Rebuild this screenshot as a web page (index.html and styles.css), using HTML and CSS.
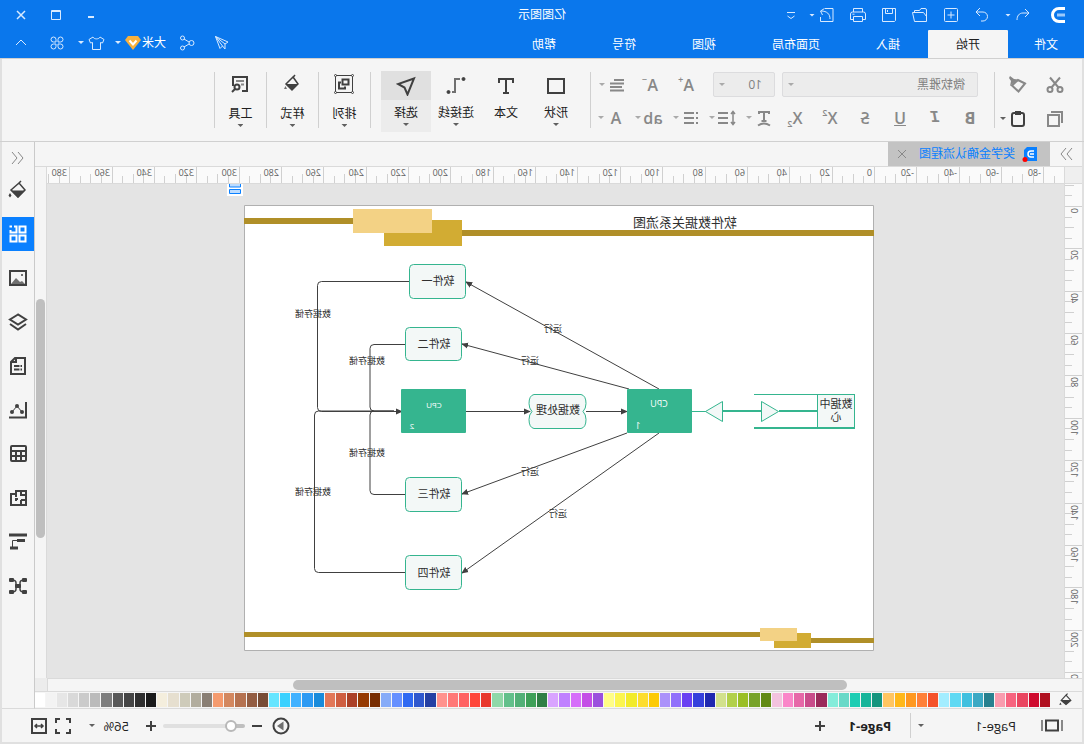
FILE: index.html
```html
<!DOCTYPE html>
<html lang="zh-CN">
<head>
<meta charset="utf-8">
<title>亿图图示</title>
<meta name="viewport" content="width=device-width, initial-scale=1">
<link rel="stylesheet" href="styles.css">
</head>
<body>
<div class="app">
  <header class="header">
    <div class="titlebar">
      <div class="titlebar-start">
        <svg class="logo" viewBox="0 0 20 20" aria-label="logo"><path d="M3 3.500h6a6.500 6.500 0 0 1 0 13H3" fill="none" stroke="#fff" stroke-width="3"/><path d="M3 10h8" stroke="#9cc9fa" stroke-width="3"/></svg>
        <div class="quick">
          <span class="split"><button aria-label="撤销"><svg class="icon" viewBox="0 0 20 20"><path d="M8 4L4 8l4 4M4 8h6c4 0 6 3 6 7"/></svg></button><i class="caret"></i></span>
          <button aria-label="重做"><svg class="icon" viewBox="0 0 20 20"><path d="M12 3l4 4-4 4M16 7H9a4.500 4.500 0 0 0 0 9h2"/></svg></button>
          <button aria-label="新建"><svg class="icon" viewBox="0 0 20 20"><rect x="3.500" y="3.500" width="13" height="13" rx="1"/><path d="M10 6.500v7M6.500 10h7"/></svg></button>
          <button aria-label="打开"><svg class="icon" viewBox="0 0 20 20"><path d="M3.500 16.500V5q0-1.500 1.500-1.500h4l1.500 2h5v2M3.500 16.500h12l2-9h-11l-3 4"/></svg></button>
          <button aria-label="保存"><svg class="icon" viewBox="0 0 20 20"><path d="M3.500 3.500h13v13h-12l-1-1zM6.500 3.500v5h7v-5M11.500 5v2"/></svg></button>
          <button aria-label="打印"><svg class="icon" viewBox="0 0 20 20"><path d="M5.500 7V3.500h9V7M5 14.500H2.500V9q0-2 2-2h11q2 0 2 2v5.500H15M5.500 11.500h9v5h-9zM13.500 9.200h2"/></svg></button>
          <span class="split"><button aria-label="导出"><svg class="icon" viewBox="0 0 20 20"><path d="M12 3.500H4v13h12.500V12M7 14c0-5 3-8 9-8M12.500 3.500L16.500 6l-2 4"/></svg></button><i class="caret"></i></span>
          <button class="more" aria-label="更多"><svg class="icon" viewBox="0 0 20 20"><path d="M6 7.500h8M6.500 11l3.500 2.500 3.500-2.500"/></svg></button>
        </div>
      </div>
      <h1 class="title">亿图图示</h1>
      <div class="window-controls">
        <button aria-label="最小化"><svg class="icon strong" viewBox="0 0 20 20"><path d="M7 12h6"/></svg></button>
        <button aria-label="最大化"><svg class="icon" viewBox="0 0 20 20"><path d="M5.500 5.500h9v9h-9zM5.500 6.500h9"/></svg></button>
        <button aria-label="关闭"><svg class="icon" viewBox="0 0 20 20"><path d="M6 6l8 8M14 6l-8 8" stroke-width="1.500"/></svg></button>
      </div>
    </div>
    <div class="menubar">
      <nav class="menus">
        <a class="menu-item file" href="#">文件</a>
        <a class="menu-item active" href="#">开始</a>
        <a class="menu-item" href="#">插入</a>
        <a class="menu-item" href="#">页面布局</a>
        <a class="menu-item" href="#">视图</a>
        <a class="menu-item" href="#">符号</a>
        <a class="menu-item" href="#">帮助</a>
      </nav>
      <div class="account">
        <button aria-label="发送"><svg class="icon" viewBox="0 0 20 20"><path d="M16.500 3.500L4 9l3 2v5l2.500-3 2.500 2.500zM16.500 3.500L7 11M16.500 3.500L9.500 13"/></svg></button>
        <button aria-label="分享"><svg class="icon" viewBox="0 0 20 20"><circle cx="5.500" cy="10" r="2.500"/><circle cx="14.500" cy="5" r="2"/><circle cx="14.500" cy="15" r="2"/><path d="M8 9l5-3M8 11l5 3"/></svg></button>
        <button class="user">大米<svg class="badge" viewBox="0 0 18 18"><path d="M4 2h10l3 4-8 10L1 6z" fill="#f9b13c"/><path d="M5.500 6.500L9 10.500l3.500-4" fill="none" stroke="#fff" stroke-width="2"/></svg><i class="caret"></i></button>
        <button class="user" aria-label="主题"><svg class="icon" viewBox="0 0 20 20"><path d="M7 4L3 6.500 4.500 10l2-.5v7h8v-7l2 .5L18 6.500 14 4c-1 2.500-6 2.500-7 0z"/></svg><i class="caret"></i></button>
        <button aria-label="应用"><svg class="icon" viewBox="0 0 20 20"><path d="M9 6.500a2.500 2.500 0 1 0-2.500 2.500H9zM11 6.500a2.500 2.500 0 1 1 2.500 2.500H11zM9 13.500A2.500 2.500 0 1 1 6.500 11H9zM11 13.500a2.500 2.500 0 1 0 2.500-2.500H11z"/></svg></button>
        <button aria-label="收起"><svg class="icon" viewBox="0 0 20 20"><path d="M5 12l5-5 5 5"/></svg></button>
      </div>
    </div>
  </header>

  <section class="ribbon">
    <div class="clipboard">
      <button aria-label="剪切"><svg class="tool" viewBox="0 0 20 20"><circle cx="5" cy="14.500" r="2.500"/><circle cx="15" cy="14.500" r="2.500"/><path d="M5 2.500l8.500 10M15 2.500l-8.500 10"/></svg></button>
      <button aria-label="格式刷"><svg class="tool" viewBox="0 0 20 20"><path d="M3 8.500l7-3.500 6 5.500-6.500 6z"/><path d="M10 4.500l4-.5 4-3 1 2-2 3 1 5z" fill="#888" stroke="none"/></svg></button>
      <button aria-label="复制"><svg class="tool" viewBox="0 0 20 20"><path d="M6 6h11v11H6zM3 14V3h11"/></svg></button>
      <button class="split" aria-label="粘贴"><svg class="tool dark" viewBox="0 0 20 20"><rect x="4" y="4" width="12" height="13" rx="2"/><path d="M7 2h6v4H7z" fill="#404040" stroke="none"/></svg><i class="caret dark"></i></button>
    </div>
    <div class="divider"></div>
    <div class="font-tools">
      <div class="font-row">
        <span class="combo"><select class="font-family" aria-label="字体"><option>微软雅黑</option></select><i class="caret"></i></span>
        <span class="combo combo-size"><select class="font-size" aria-label="字号"><option>10</option></select><i class="caret"></i></span>
        <button class="glyph" aria-label="增大字号">A<sup>+</sup></button>
        <button class="glyph" aria-label="减小字号">A<sup>−</sup></button>
        <button class="split" aria-label="对齐"><svg class="tool" viewBox="0 0 20 20"><path d="M3 5h10M3 8.500h14M5 12h12M3 15.500h14"/></svg><i class="caret"></i></button>
      </div>
      <div class="format-row">
        <button class="glyph bold" aria-label="加粗">B</button>
        <button class="glyph italic" aria-label="斜体">I</button>
        <button class="glyph under" aria-label="下划线">U</button>
        <button class="glyph strike" aria-label="删除线">S</button>
        <button class="glyph" aria-label="上标">X<sup>2</sup></button>
        <button class="glyph" aria-label="下标">X<sub>2</sub></button>
        <button class="split" aria-label="文字方向"><svg class="tool" viewBox="0 0 20 20"><path d="M5 6V4h10v2M10 4v9M7.500 13h5M4 17.500q6-4 12 0"/></svg><i class="caret"></i></button>
        <button class="split" aria-label="行距"><svg class="tool" viewBox="0 0 20 20"><path d="M9 5h10M9 10h10M9 15h10"/><path d="M4 4v12M2 6l2-2.500L6 6M2 14l2 2.500L6 14" stroke-width="1.500"/></svg><i class="caret"></i></button>
        <button class="split" aria-label="列表"><svg class="tool" viewBox="0 0 20 20"><path d="M3 5h2M3 10h2M3 15h2M7 5h10M7 10h10M7 15h10"/></svg><i class="caret"></i></button>
        <button class="split glyph" aria-label="大小写"><span class="letters">ab</span><i class="caret"></i></button>
        <button class="split glyph" aria-label="字体颜色"><span class="letters">A</span><i class="caret"></i></button>
      </div>
    </div>
    <div class="divider"></div>
    <div class="big-tools">
      <button class="big"><span class="big-icon"><svg class="tool dark" viewBox="0 0 20 20"><path d="M2 3h16v14H2z"/></svg></span><span>形状</span><i class="caret dark"></i></button>
      <button class="big"><span class="big-icon"><svg class="tool dark" viewBox="0 0 20 20"><path d="M3 7V3h14v4M10 3v14M7 17h6"/></svg></span><span>文本</span></button>
      <button class="big"><span class="big-icon"><svg class="tool dark" viewBox="0 0 20 20"><path d="M6 3h5v13H14" stroke="#707070"/><circle cx="2.500" cy="3" r="1.500" fill="#404040" stroke-width="1"/><circle cx="17.500" cy="16" r="1.500" fill="#404040" stroke-width="1"/></svg></span><span>连接线</span><i class="caret dark"></i></button>
      <button class="big selected"><span class="big-icon"><svg class="tool dark" viewBox="0 0 20 20"><path d="M2 2.500l16 5.500-6.500 3.500-3 7z"/></svg></span><span>选择</span><i class="caret dark"></i></button>
    </div>
    <div class="divider"></div>
    <button class="big compact"><span class="big-icon"><svg class="tool dark thin" viewBox="0 0 20 20"><path d="M1.500 1.500h17v17h-17z"/><path d="M5.500 5.500h6v5h-6zM13 8.500h2v6H9v-2" stroke-width="2"/><g fill="#f5f5f5"><circle cx="1.500" cy="1.500" r="1"/><circle cx="18.500" cy="1.500" r="1"/><circle cx="1.500" cy="18.500" r="1"/><circle cx="18.500" cy="18.500" r="1"/></g></svg></span><span>排列</span><i class="caret dark"></i></button>
    <div class="divider"></div>
    <button class="big compact"><span class="big-icon"><svg class="tool dark" viewBox="0 0 20 20"><path d="M7 1l2.500 3M9 3l7 7-6 6-6-6z" stroke-width="1.500"/><path d="M4 10h12l-6 6z" fill="#404040" stroke="none"/><path d="M16.500 12l1.500 3h-3z" fill="#707070" stroke="none"/></svg></span><span>样式</span><i class="caret dark"></i></button>
    <div class="divider"></div>
    <button class="big compact"><span class="big-icon"><svg class="tool dark" viewBox="0 0 20 20"><path d="M8 17H3V3h14v9" /><path d="M6 7h8M6 10.500h3" stroke="#888"/><circle cx="13" cy="13" r="2.500"/><path d="M15 15l3 3"/></svg></span><span>工具</span><i class="caret dark"></i></button>
    <div class="divider"></div>
  </section>

  <div class="body">
    <main class="main">
      <div class="doc-tabs">
        <button class="expand" aria-label="展开"><svg class="tool thin" viewBox="0 0 20 20"><path d="M4 4l5 6-5 6M10 4l5 6-5 6"/></svg></button>
        <div class="doc-tab">
          <svg class="doc-icon" viewBox="0 0 16 16"><path d="M1 1h10l3 3v11H1z" fill="#0a80ff"/><path d="M4 5h3q3 0 3 3t-3 3H4M4 8h4" fill="none" stroke="#fff" stroke-width="1.500"/><circle cx="13" cy="13.500" r="2.500" fill="#f00"/></svg>
          <a href="#">奖学金确认流程图</a>
          <button aria-label="关闭文档"><svg class="tool thin" viewBox="0 0 20 20"><path d="M6 6l8 8M14 6l-8 8"/></svg></button>
        </div>
      </div>
      <div class="workspace">
        <div class="corner"></div>
        <svg class="ruler-h" id="ruler-h"></svg>
        <svg class="ruler-v" id="ruler-v"></svg>
        <div class="canvas">
          <svg class="float-tool" viewBox="0 0 16 12"><path d="M0 0h16v12H0z" fill="#fff"/><path d="M2.500-1h11v4h-11zM2.500 5.500h11v4h-11z" fill="#bcdcff" stroke="#0a80ff"/></svg>
          <svg class="page" viewBox="210 205 630 446" role="img" aria-label="软件数据关系流图">
            <defs><marker id="head" viewBox="0 0 8 8" refX="7" refY="4" markerWidth="7" markerHeight="7" orient="auto" markerUnits="userSpaceOnUse"><path d="M0 0.500l8 3.500-8 3.500z" fill="#404040"/></marker></defs>
            <path d="M210.500 205.500h629v445h-629z" fill="#fff" stroke="#b0b0b0"/>
            <g fill="#b08f28"><path d="M731 218h109v6H731zM210 230h412v6H210zM324 632h516v5H324zM210 638h63v5H210z"/></g>
            <g fill="#d2ac33"><rect x="622" y="220" width="78" height="26"/><rect x="273" y="633" width="37" height="15"/></g>
            <g fill="#f3d285"><rect x="652" y="209" width="79" height="24"/><rect x="287" y="628" width="37" height="13"/></g>
            <g class="links">
              <path d="M425 389L618 282" marker-end="url(#head)"/>
              <path d="M455 389L622 344" marker-end="url(#head)"/>
              <path d="M457 433L622 494" marker-end="url(#head)"/>
              <path d="M425 433L622 573" marker-end="url(#head)"/>
              <path d="M498 411.500H457" marker-end="url(#head)"/>
              <path d="M618 411.500H554" marker-end="url(#head)"/>
              <path d="M675 281.500H762.500q4 0 4 4V407.500q0 4-4 4H682" marker-end="url(#head)"/>
              <path d="M679 572.500h86.500q4 0 4-4V415q0-4-4-4H690"/>
              <path d="M679 344.500h31q4 0 4 4V407q0 4-4 4H690M679 494.500h31q4 0 4-4V415q0-4-4-4"/>
            </g>
            <g class="node">
              <rect x="618.500" y="264.500" width="56" height="34" rx="4"/>
              <rect x="622.500" y="327.500" width="56" height="33" rx="4"/>
              <rect x="622.500" y="477.500" width="56" height="34" rx="4"/>
              <rect x="622.500" y="555.500" width="56" height="34" rx="4"/>
              <path d="M503 394.500h47q5 1 5 9 0 5-3 8 3 3 3 8 0 8-5 9h-47q-5-1-5-9 0-5 3-8-3-3-3-8 0-8 5-9z"/>
              <path d="M229.500 394.500h37v34h-37z"/>
              <path d="M229 394.500h101M378 411.500h14"/>
              <path d="M229 428h101M267 411h38M322 411h39" stroke-width="2"/>
              <path d="M378.500 411.500l-17-10v20zM305.500 411.500l17-10v20z"/>
            </g>
            <g fill="#35b58f"><rect x="392" y="389" width="65" height="44" rx="1"/><rect x="618" y="389" width="65" height="44" rx="1"/></g>
            <g class="label-title"><text x="399" y="227">软件数据关系流图</text></g>
            <g class="label-node">
              <text x="646" y="285">软件一</text><text x="650" y="348">软件二</text><text x="650" y="498">软件三</text><text x="650" y="577">软件四</text>
              <text x="526" y="414">数据处理</text><text x="248" y="408">数据中</text><text x="248" y="421">心</text>
            </g>
            <g class="label-link">
              <text x="531" y="332">运行</text><text x="554" y="364">运行</text><text x="554" y="475">运行</text><text x="526" y="517">运行</text>
              <text x="771" y="317">数据存储</text><text x="717" y="364">数据存储</text><text x="717" y="456">数据存储</text><text x="771" y="495">数据存储</text>
            </g>
            <g class="label-cpu"><text x="425" y="407">CPU</text><text x="446" y="429">1</text></g>
            <g class="label-cpu small"><text x="650" y="408">CPU</text><text x="672" y="429">2</text></g>
          </svg>
        </div>
        <div class="scroll-v"><div class="thumb-v"></div></div>
      </div>
      <div class="scroll-row"><div class="scroll-h"><div class="thumb-h"></div></div></div>
      <div class="palette">
        <svg class="tool dark palette-icon" viewBox="0 0 20 20"><path d="M8 2l2 2M10 4l6 6.500-6 5-6-5z" stroke-width="1.500"/><path d="M4 10h12l-6 6z" fill="#404040" stroke="none"/><path d="M17 13l1.500 3h-3z" fill="#404040" stroke="none"/></svg>
        <div class="swatches" id="swatches"></div>
      </div>
    </main>
    <aside class="sidebar">
      <button class="side-top" aria-label="折叠"><svg class="tool thin" viewBox="0 0 20 20"><path d="M10 4l-5 6 5 6M16 4l-5 6 5 6"/></svg></button>
      <button aria-label="填充"><svg class="tool dark" viewBox="0 0 20 20"><path d="M7 1l3 3M9 3l8 7-7 7-7-7z" stroke-width="1.500"/><path d="M3 10.500h14L10 18z" fill="#404040" stroke="none"/><path d="M18 13l1.500 2.500-1.500 2-1.500-2z" fill="#404040" stroke="none"/></svg></button>
      <button class="current" aria-label="符号库"><svg class="tool" viewBox="0 0 20 20"><path d="M2.500 2.500h6v6h-6zM2.500 11.500h6v6h-6zM11.500 11.500h6v6h-6z"/><path d="M14 2.500h-2.500v6h6V6M16 2.500h2.500"/></svg></button>
      <button aria-label="图片"><svg class="tool dark" viewBox="0 0 20 20"><path d="M2 3h16v14H2z"/><path d="M3 16l3-3 2 1 4-4 5 6z" fill="#707070" stroke="none"/><circle cx="6" cy="7" r="1" fill="#404040" stroke="none"/></svg></button>
      <button aria-label="图层"><svg class="tool dark" viewBox="0 0 20 20"><path d="M10 2.500l8 5-8 5-8-5zM2 12l8 5.500 8-5.500"/></svg></button>
      <button aria-label="页面"><svg class="tool dark" viewBox="0 0 20 20"><path d="M3 2h10l4 4v12H3z"/><path d="M12 2v4h4M8.500 10H14M8.500 13.500H14M6 10h1.500M6 13.500h1.500"/></svg></button>
      <button aria-label="图表"><svg class="tool dark" viewBox="0 0 20 20"><path d="M2 2v15.500h17"/><path d="M6 12l5-6 5 6" stroke-width="1"/><g fill="#404040" stroke="none"><circle cx="6" cy="12" r="2"/><circle cx="11" cy="6" r="2"/><circle cx="16" cy="12" r="2"/></g></svg></button>
      <button aria-label="表格"><svg class="tool dark" viewBox="0 0 20 20"><rect x="2" y="2" width="15" height="15" rx="1"/><path d="M2 7h15M2 12h15M7 7v10M12 7v10"/></svg></button>
      <button aria-label="平面图"><svg class="tool dark" viewBox="0 0 20 20"><path d="M2 3h10v3h5v11H2zM2 7h5V3M7 12H2M7 17v-5M12 6v3M12 13v-2h-2"/></svg></button>
      <button aria-label="甘特图"><svg class="tool dark" viewBox="0 0 20 20"><path d="M1 3h18" stroke-width="3"/><path d="M3 8.500h8M10 16h8" stroke-width="3"/><path d="M11 8.500h4.500V15" stroke-width="1"/></svg></button>
      <button aria-label="思维导图"><svg class="tool dark" viewBox="0 0 20 20"><path d="M4 4q4 0 4 3v6q0 3-4 3M16 4q-4 0-4 3v6q0 3 4 3M8 10h4" stroke-width="1.500"/><g fill="#404040" stroke="none"><rect x="1" y="2" width="5" height="4" rx="1"/><rect x="1" y="14" width="5" height="4" rx="1"/><rect x="14" y="2" width="5" height="4" rx="1"/><rect x="14" y="14" width="5" height="4" rx="1"/><rect x="7" y="8" width="6" height="4" rx="1"/></g></svg></button>
    </aside>
  </div>

  <footer class="status">
    <div class="pages">
      <button aria-label="页面视图"><svg class="layout-icon" viewBox="0 0 24 20"><path d="M6 4.500h12v10H6z"/><path d="M2 4v11M22 4v11" stroke="#888"/></svg></button>
      <button class="page-picker">Page-1<i class="caret dark"></i></button>
      <button class="page-tab">Page-1</button>
      <button aria-label="添加页面"><svg class="tool dark" viewBox="0 0 20 20"><path d="M10 5v10M5 10h10"/></svg></button>
    </div>
    <div class="zoom">
      <button aria-label="演示"><svg class="tool dark" viewBox="0 0 20 20"><circle cx="10" cy="10" r="7.500"/><path d="M7.500 5.500l6.500 4.500-6.500 4.500z" fill="#707070" stroke="none"/></svg></button>
      <button aria-label="缩小"><svg class="tool dark" viewBox="0 0 20 20"><path d="M5 10h10"/></svg></button>
      <input type="range" min="0" max="100" value="11" aria-label="缩放">
      <button aria-label="放大"><svg class="tool dark" viewBox="0 0 20 20"><path d="M10 5v10M5 10h10"/></svg></button>
      <button class="percent">56%<i class="caret dark"></i></button>
      <button aria-label="全屏"><svg class="tool dark" viewBox="0 0 20 20"><path d="M3 7V3h4M13 3h4v4M17 13v4h-4M7 17H3v-4"/></svg></button>
      <button aria-label="适合宽度"><svg class="tool dark" viewBox="0 0 20 20"><path d="M3 3h14v14H3z"/><path d="M6 10h8M8 8l-2 2 2 2M12 8l2 2-2 2" stroke-width="1.500"/></svg></button>
    </div>
  </footer>
</div>
<script src="app.js"></script>
</body>
</html>
```

FILE: styles.css
```css
* { box-sizing: border-box; }

body {
  margin: 0;
  font-family: "Open Sans", "Noto Sans CJK SC", sans-serif;
  font-size: 12px;
  line-height: 16px;
  color: #202020;
  overflow: hidden;
}

button {
  display: flex;
  align-items: center;
  justify-content: center;
  padding: 0;
  border: 0;
  background: none;
  color: inherit;
  font: inherit;
}

a { color: inherit; text-decoration: none; }

/* The whole window is shown as a mirror image. */
.app {
  display: flex;
  flex-direction: column;
  height: 100vh;
  background: #f5f5f5;
  transform: scaleX(-1);
}

.icon {
  flex: none;
  width: 20px;
  height: 20px;
  fill: none;
  stroke: #d8eaff;
  stroke-width: 1;
}
.icon.strong { stroke-width: 2; }

.tool {
  width: 20px;
  height: 20px;
  flex: none;
  fill: none;
  stroke: #888;
  stroke-width: 2;
}
.tool.dark { stroke: #404040; }
.tool.thin { stroke-width: 1; }

.caret {
  flex: none;
  width: 6px;
  height: 3px;
  margin: 0 2px;
  background: #aaa;
  clip-path: polygon(0 0, 100% 0, 50% 100%);
}
.caret.dark { background: #606060; }
.header .caret { background: #d8eaff; }

.split { display: flex; align-items: center; }

/* Header */
.header { flex: none; background: #0a77ec; color: #fff; }

.titlebar { display: flex; align-items: center; height: 30px; padding: 0 11px; }
.titlebar-start, .window-controls { display: flex; flex: 1; align-items: center; }
.logo { width: 20px; height: 20px; margin: 0 15px 0 5px; }
.quick { display: flex; align-items: center; gap: 11px; }
.more { width: 10px; }
.title { margin: 0; font-size: 12px; font-weight: 400; }
.window-controls { justify-content: flex-end; gap: 15px; }

.menubar { display: flex; justify-content: space-between; height: 28px; }
.menus { display: flex; }
.menu-item { padding: 7px 28px 5px; }
.menu-item.file { padding: 7px 26px 5px; }
.menu-item.active { background: #f5f5f5; color: #202020; border-radius: 1px 1px 0 0; }
.account {
  display: grid;
  grid-template-columns: 35px 31px 59px 40px 36px 20px;
  align-items: center;
  justify-items: start;
  padding: 0 11px 3px 0;
}
.account .caret { margin: 0 3px; }
.badge { width: 18px; height: 18px; }

/* Ribbon */
.ribbon {
  display: flex;
  flex: none;
  height: 84px;
  padding: 12px 0 0 11px;
  border: solid #d0d0d0;
  border-width: 1px 0;
  box-shadow: inset 2px 0 #e0e0e0, inset -2px 0 #e0e0e0;
}
.divider { flex: none; width: 1px; height: 56px; margin-top: 1px; background: #d0d0d0; }

.clipboard {
  display: grid;
  grid-template-columns: 36px 32px;
  grid-template-rows: 25px 25px;
  gap: 9px;
  padding: 1px 1px 0 0;
}
.clipboard button:nth-child(even) { justify-content: flex-start; }

.font-tools { width: 403px; padding: 1px 0 0 14px; }
.font-row, .format-row { display: grid; height: 25px; align-items: center; justify-items: start; }
.font-row { grid-template-columns: 203px 79px 36px 33px 30px; margin: 0 0 8px 2px; }
.format-row { grid-template-columns: 35px 35px 35px 35px 35px 31px 37px 36px 38px 37px 30px; }

.combo { display: flex; align-items: center; position: relative; }
.combo .caret { position: absolute; right: 4px; }
.combo select {
  appearance: none;
  width: 196px;
  height: 25px;
  padding: 0 12px;
  border: 1px solid #dcdcde;
  border-radius: 2px;
  background: #ececec;
  color: #808080;
  font: inherit;
}
.combo .font-size { width: 62px; }

.glyph {
  min-width: 20px;
  height: 20px;
  color: #888;
  font-family: "Open Sans", sans-serif;
  font-size: 16px;
  font-weight: 600;
  line-height: 20px;
}
.glyph sup, .glyph sub { font-size: 9px; line-height: 9px; }
.glyph sup { align-self: flex-start; }
.glyph sub { align-self: flex-end; }
.bold { font-weight: 700; }
.italic { font-style: italic; font-family: "Liberation Mono", monospace; font-weight: 700; }
.under { text-decoration: underline; }
.strike { text-decoration: line-through; }
.letters { min-width: 20px; }

.big-tools { display: flex; padding: 0 10px 0 9px; }
.big {
  flex-direction: column;
  justify-content: flex-start;
  width: 50px;
  height: 61px;
}
.big-icon { display: grid; place-items: center; width: 100%; height: 29px; margin-bottom: 5px; }
.big .caret { margin-top: 2px; }
.selected { background: #ececec; }
.selected .big-icon { background: #e0e0e0; }
.compact { width: 51px; }
.compact .big-icon { height: 25px; margin-bottom: 10px; }

/* Work area */
.body { display: flex; flex: 1; min-height: 0; border: solid #e0e0e0; border-width: 0 2px; }
.main { display: flex; flex: 1; flex-direction: column; min-width: 0; }

.doc-tabs { display: flex; flex: none; height: 24px; }
.expand { width: 32px; }
.doc-tab {
  display: flex;
  align-items: center;
  gap: 7px;
  width: 162px;
  padding-left: 12px;
  background: #c3c3c3;
  color: #0a80ff;
}
.doc-icon { width: 16px; height: 16px; }

.workspace {
  display: grid;
  grid-template-columns: 18px 1fr 12px;
  grid-template-rows: 18px 1fr;
  flex: 1;
  min-height: 0;
}
.corner { background: #efefef; border: solid #dadada; border-width: 1px 1px 1px 0; }
.ruler-h, .ruler-v { display: block; width: 100%; height: 100%; background: #fafafa; overflow: hidden; }
.ruler-h { border: solid #dadada; border-width: 1px 0; }
.ruler-v { min-height: 0; border-right: 1px solid #dadada; }
.tick { stroke: #d0d0d0; stroke-width: 1; shape-rendering: crispEdges; }
.ruler-label { fill: #606060; font-size: 9px; }
.ruler-v .ruler-label { text-anchor: end; }

.canvas { min-height: 0; overflow: hidden; position: relative; padding: 21px 0 0 190px; background: #e4e4e4; }
.page { display: block; width: 630px; height: 446px; }
.float-tool { position: absolute; left: 821px; top: 0; width: 16px; height: 12px; }

.scroll-v { grid-column: 3; grid-row: 1 / 3; padding: 132px 1px 0; border: solid #dadada; border-width: 1px 0 0 1px; }
.thumb-v { height: 239px; border-radius: 5px; background: #bfbfbf; }
.scroll-row { flex: none; height: 13px; padding-right: 12px; background: #ececec; }
.scroll-h { height: 13px; padding: 1px 0 0 235px; border: solid #dadada; border-width: 1px 1px 0 0; background: #f5f5f5; }
.thumb-h { width: 554px; height: 10px; border-radius: 5px; background: #bfbfbf; }

.palette { display: flex; flex: none; align-items: center; height: 18px; border: solid #dadada; border-width: 1px 0; }
.palette-icon { width: 16px; height: 16px; margin: 0 8px; }
.swatches { display: flex; flex: 1; gap: 1px; height: 14px; }
.swatch { flex: 1; }

.sidebar {
  display: flex;
  flex: none;
  flex-direction: column;
  gap: 10px;
  width: 33px;
  border-left: 1px solid #cacaca;
  border-bottom: 1px solid #dadada;
}
.sidebar button { flex: none; height: 34px; }
.sidebar .side-top { height: 31px; margin-bottom: -10px; }
.sidebar .current { background: #0a80ff; }
.current .tool { stroke: #fff; }

/* Diagram */
.links { fill: none; stroke: #404040; stroke-width: 1; }
.node { fill: #f3f8f7; stroke: #35b58f; stroke-width: 1; }
.page text { text-anchor: middle; fill: #303030; font-family: "Noto Sans CJK SC", sans-serif; }
.label-title { font-size: 13px; }
.label-node { font-size: 11px; }
.label-link { font-size: 9px; }
.page .label-cpu text { fill: #fff; font-size: 9px; font-family: "Open Sans", sans-serif; }
.page .label-cpu.small text { font-size: 8px; }

/* Status bar */
.status {
  display: flex;
  flex: none;
  align-items: center;
  justify-content: space-between;
  height: 35px;
  padding: 0 27px 0 18px;
  border: solid #e0e0e0;
  border-width: 0 2px 2px;
  font-size: 13px;
}
.pages, .zoom { display: flex; align-items: center; }
.layout-icon { width: 24px; height: 20px; fill: none; stroke: #404040; stroke-width: 2; }
.page-picker { justify-content: space-between; width: 130px; padding: 0 5px 0 24px; height: 25px; border-right: 1px solid #d0d0d0; }
.page-tab { width: 80px; font-weight: 700; }
.zoom input {
  appearance: none;
  width: 82px;
  height: 4px;
  margin: 0 2px;
  border-radius: 2px;
  background: linear-gradient(to right, #bfbfbf 15%, #e0e0e0 15%);
}
.zoom input::-webkit-slider-thumb {
  appearance: none;
  width: 12px;
  height: 12px;
  border: 2px solid #b8b8b8;
  border-radius: 50%;
  background: #fff;
}
.zoom button:nth-child(2) { margin-left: 4px; }
.percent { justify-content: space-between; width: 42px; margin: 0 14px 0 12px; }
.percent + button { margin-right: 4px; }
```

FILE: app.js
```js
const SVG = "http://www.w3.org/2000/svg";
const UNIT = 42.36;

function add(parent, name, className, attrs, text) {
  const el = document.createElementNS(SVG, name);
  el.setAttribute("class", className);
  for (const key in attrs) el.setAttribute(key, attrs[key]);
  if (text !== undefined) el.textContent = text;
  parent.appendChild(el);
}

// Four divisions for each labelled step of 20.
const tickLength = (i) => (i % 4 === 0 ? 18 : i % 2 === 0 ? 9 : 7);

const horizontal = document.getElementById("ruler-h");
for (let i = -17; i <= 78; i++) {
  const x = Math.round(190 + (i * UNIT) / 4);
  add(horizontal, "line", "tick", { x1: x, x2: x, y1: 16 - tickLength(i), y2: 16 });
  if (i % 4 === 0) add(horizontal, "text", "ruler-label", { x: x + 2, y: 9 }, i * 5);
}

const vertical = document.getElementById("ruler-v");
for (let i = -2; i <= 44; i++) {
  const y = Math.round(22 + (i * UNIT) / 4);
  add(vertical, "line", "tick", { x1: 17 - tickLength(i), x2: 17, y1: y, y2: y });
  if (i % 4 === 0) {
    add(vertical, "text", "ruler-label", { transform: `translate(11 ${y + 2}) rotate(-90)` }, i * 5);
  }
}

const colors = `
  b01020 cf0a2e ea4560 f7637f f99bae 27808f 3ba9c4 40c0df 5fd9f3 a3edff
  f5522a ff8038 ff981f ffb81a ffc560 15957e 17b59a 1dcdb3 68d9c8 84ecda
  9a2a5b c94c8b e668a8 fa87c9 f3c3de 618a13 77a329 9bbf26 b2d04a d2e18c
  1f28b0 3540dc 6a40f2 9070fb ab92fa fdcb05 fddd30 f2eb2c fbf550 fffd85
  9b50dd c44ee6 d66efa c080ff d9a3ff 2f7f45 3ea058 52b077 62c08b 90d8a8
  e8362b ff463a ff6263 ff7877 ff928d 243fa3 2f58ce 2f69f2 6690ff 86abf8
  782d02 963a02 ab4027 cf5e41 e27758 188bdb 2c9af3 42b2ff 3bd1ff 66e5ff
  784c35 935d42 b57250 d38860 f59b6e 8a7f74 b2ad9e cecbba e6dfcf f4eedd
  1a1a1a 2e2e2e 444444 585858 7d7d7d bbbbbb cbcbcb d9d9d9 e6e6e6 f3f3f3 ffffff
`.trim().split(/\s+/);

const swatches = document.getElementById("swatches");
for (const color of colors) {
  const swatch = document.createElement("span");
  swatch.className = "swatch";
  swatch.style.background = `#${color}`;
  swatches.appendChild(swatch);
}
```
